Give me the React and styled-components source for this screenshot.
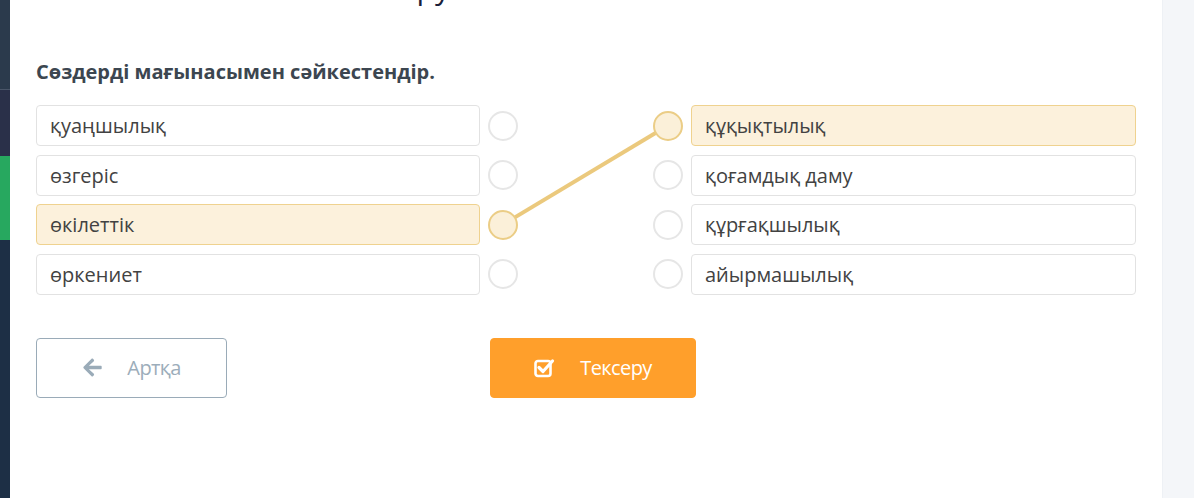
import React from 'react';
import styled, { createGlobalStyle } from 'styled-components';
import { FaArrowLeft } from 'react-icons/fa';

const GlobalStyle = createGlobalStyle`
	html, body {
		margin: 0;
		padding: 0;
		background: #ffffff;
		font-family: "Open Sans", "Liberation Sans", sans-serif;
	}
`;

const Page = styled.div`
	display: flex;
	width: 1194px;
	height: 498px;
	overflow: hidden;
`;

const Sidebar = styled.div`
	display: flex;
	flex-direction: column;
	width: 10px;
	flex-shrink: 0;
	background: #1d2f45;
`;

const SideBlock = styled.div`
	height: ${p => p.h}px;
	background: ${p => p.bg};
	border-bottom: ${p => (p.line ? '1px solid #4a5669' : 'none')};
`;

const Main = styled.div`
	flex: 1;
	padding: 0 26px;
	background: #ffffff;
`;

const Gutter = styled.div`
	width: 33px;
	flex-shrink: 0;
	background: #f4f6f9;
	border-left: 1px solid #eef1f5;
`;

const TitleClip = styled.div`
	height: 9px;
	width: 414px;
	overflow: hidden;
`;

const Title = styled.div`
	margin-top: -32px;
	text-align: right;
	font-size: 30px;
	line-height: 40px;
	color: #1b1f3b;
	white-space: nowrap;
`;

const Instruction = styled.h3`
	margin: 50px 0 0;
	font-size: 20px;
	line-height: 26px;
	font-weight: 700;
	color: #3c4650;
`;

const Board = styled.div`
	position: relative;
	margin-top: 20px;
	display: grid;
	grid-template-columns: 452px 30px 135px 30px 453px;
	row-gap: 8.5px;
`;

const Item = styled.div`
	height: 41px;
	box-sizing: border-box;
	display: flex;
	align-items: center;
	padding-left: 13px;
	font-size: 20px;
	color: #424242;
	border: 1px solid ${p => (p.active ? '#efd28f' : '#e2e2e2')};
	background: ${p => (p.active ? '#fcf1dc' : '#ffffff')};
	border-radius: 4px;
	margin: ${p => (p.side === 'left' ? '0 8px 0 0' : '0 0 0 8px')};
`;

const DotCell = styled.div`
	display: flex;
	align-items: center;
	justify-content: center;
`;

const Dot = styled.span`
	width: 30px;
	height: 30px;
	box-sizing: border-box;
	border-radius: 50%;
	border: 2px solid ${p => (p.active ? '#ebcd86' : '#e6e6e6')};
	background: ${p => (p.active ? '#fbf0d9' : '#ffffff')};
	position: relative;
	z-index: 2;
`;

const Links = styled.svg`
	position: absolute;
	left: 0;
	top: 0;
	width: 100%;
	height: 100%;
	pointer-events: none;
	z-index: 1;
`;

const Actions = styled.div`
	display: flex;
	gap: 263px;
	margin-top: 43px;
`;

const Button = styled.button`
	height: 60px;
	width: ${p => p.w}px;
	box-sizing: border-box;
	display: flex;
	align-items: center;
	justify-content: center;
	gap: ${p => p.gap}px;
	border-radius: 4px;
	font-family: "Open Sans", "Liberation Sans", sans-serif;
	font-size: 20px;
	letter-spacing: -0.6px;
	cursor: pointer;
	border: 1px solid ${p => (p.primary ? '#ff9f2b' : '#9aabb8')};
	background: ${p => (p.primary ? '#ff9f2b' : '#ffffff')};
	color: ${p => (p.primary ? '#ffffff' : '#9cadba')};
	padding: 0;
`;

const CheckIcon = () => (
	<svg width="22" height="20" viewBox="0 0 22 20">
		<rect x="1.5" y="3" width="15" height="15" rx="2.5" fill="none" stroke="#fff" strokeWidth="2.6" />
		<path d="M5 9.5 L9 13.5 L18.5 3" fill="none" stroke="#fff" strokeWidth="3.2" strokeLinecap="round" strokeLinejoin="round" />
	</svg>
);

const leftWords = ['қуаңшылық', 'өзгеріс', 'өкілеттік', 'өркениет'];
const rightWords = ['құқықтылық', 'қоғамдық даму', 'құрғақшылық', 'айырмашылық'];
const ROW = 49.5;

// pairs already joined: [leftIndex, rightIndex]
const links = [[2, 0]];

const App = () => {
	const leftActive = links.map(l => l[0]);
	const rightActive = links.map(l => l[1]);

	return (
		<Page>
			<GlobalStyle />
			<Sidebar>
				<SideBlock h={89} bg="#2b3a4c" line />
				<SideBlock h={66} bg="#2a3049" />
				<SideBlock h={84} bg="#27a85f" />
			</Sidebar>
			<Main>
				<TitleClip>
					<Title>Сәйкестіру</Title>
				</TitleClip>
				<Instruction>Сөздерді мағынасымен сәйкестендір.</Instruction>
				<Board>
					{leftWords.map((word, i) => (
						<React.Fragment key={word}>
							<Item side="left" active={leftActive.includes(i)}>{word}</Item>
							<DotCell>
								<Dot active={leftActive.includes(i)} />
							</DotCell>
							<div />
							<DotCell>
								<Dot active={rightActive.includes(i)} />
							</DotCell>
							<Item side="right" active={rightActive.includes(i)}>{rightWords[i]}</Item>
						</React.Fragment>
					))}
					<Links>
						{links.map(([l, r]) => (
							<line
								key={`${l}-${r}`}
								x1={467}
								y1={20.5 + l * ROW}
								x2={632}
								y2={20.5 + r * ROW}
								stroke="#ebc97d"
								strokeWidth="4"
							/>
						))}
					</Links>
				</Board>
				<Actions>
					<Button w={191} gap={24}>
						<FaArrowLeft size={21} color="#9aabb8" />
						Артқа
					</Button>
					<Button primary w={206} gap={24}>
						<CheckIcon />
						Тексеру
					</Button>
				</Actions>
			</Main>
			<Gutter />
		</Page>
	);
};

export default App;
